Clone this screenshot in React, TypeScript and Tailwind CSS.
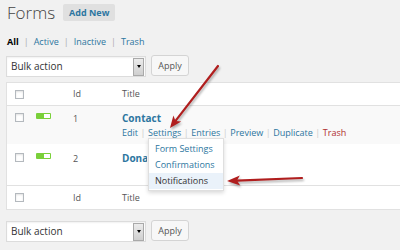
import React from 'react'

const font = "font-['Open_Sans','Liberation_Sans',sans-serif]"

function Checkbox() {
  return (
    <div className="w-[9px] h-[9px] border border-[#b4b9be] bg-white shadow-[inset_0_1px_2px_rgba(0,0,0,0.12)]" />
  )
}

function Toggle() {
  return (
    <div className="w-[15px] h-[6px] rounded-[1px] bg-[#7ad03a] flex justify-end items-center pr-[1px]">
      <div className="w-[6px] h-[4px] bg-white" />
    </div>
  )
}

function BulkNav() {
  return (
    <div className="flex items-start gap-[5px] pl-[6px]">
      <div className="mt-[1px] w-[140px] h-[21px] border border-[#dcdcdc] bg-white flex items-center justify-between pl-[4px] pr-[1px] shadow-[inset_0_1px_2px_rgba(0,0,0,0.06)]">
        <span className="text-[10px] text-[#333]">Bulk action</span>
        <div className="w-[11px] h-[18px] border border-[#a9a9a9] bg-gradient-to-b from-[#ececec] to-[#cfcfcf] flex items-center justify-center">
          <div className="w-0 h-0 border-l-[2px] border-r-[2px] border-t-[3px] border-l-transparent border-r-transparent border-t-black" />
        </div>
      </div>
      <button className="w-[38px] h-[21px] rounded-[3px] border border-[#d4d4d4] bg-[#f7f7f7] text-[9px] text-[#555] flex items-center justify-center">
        Apply
      </button>
    </div>
  )
}

function RowActions() {
  const items: { label: string; danger?: boolean }[] = [
    { label: 'Edit' },
    { label: 'Settings' },
    { label: 'Entries' },
    { label: 'Preview' },
    { label: 'Duplicate' },
    { label: 'Trash', danger: true },
  ]
  return (
    <div className="mt-[2px] flex items-center text-[9px] leading-[12px] whitespace-nowrap">
      {items.map((item, index) => (
        <span key={item.label} className="flex items-center">
          {index > 0 ? <span className="text-[#ccc] mx-[2.5px]">|</span> : null}
          <span className={item.danger ? 'text-[#b03030]' : 'text-[#2d76a0]'}>{item.label}</span>
        </span>
      ))}
    </div>
  )
}

export default function App() {
  return (
    <div className={`relative w-[400px] h-[250px] overflow-hidden bg-[#f1f1f1] ${font} text-[#555]`}>
      <div className="pt-[4px] pl-[7px] flex items-center gap-[8px] h-[21px]">
        <h1 className="text-[17px] font-light text-[#444] leading-none">Forms</h1>
        <button className="h-[17px] px-[6px] bg-[#e0e0e0] rounded-[2px] text-[9px] font-bold text-[#2d76a0]">
          Add New
        </button>
      </div>

      <div className="mt-[15px] pl-[7px] flex items-center h-[12px] text-[9px]">
        <span className="font-bold text-black">All</span>
        <span className="text-[#aaa] mx-[5px]">|</span>
        <span className="text-[#2d76a0]">Active</span>
        <span className="text-[#aaa] mx-[5px]">|</span>
        <span className="text-[#2d76a0]">Inactive</span>
        <span className="text-[#aaa] mx-[5px]">|</span>
        <span className="text-[#2d76a0]">Trash</span>
      </div>

      <div className="mt-[7px]">
        <BulkNav />
      </div>

      <div className="mt-[5px] ml-[6px] w-[420px] border border-[#e1e1e1] bg-white text-[9px]">
        <div className="h-[23px] flex items-center border-b border-[#e1e1e1]">
          <div className="w-[29px] pl-[8px]"><Checkbox /></div>
          <div className="w-[37px]" />
          <div className="w-[49px] text-[#555]">Id</div>
          <div className="text-[#555]">Title</div>
        </div>

        <div className="h-[38px] flex items-start bg-[#f9f9f9]">
          <div className="w-[29px] pl-[8px] pt-[7px]"><Checkbox /></div>
          <div className="w-[37px] pt-[7px]"><Toggle /></div>
          <div className="w-[49px] pt-[7px] leading-[12px] text-[#555]">1</div>
          <div className="pt-[6px]">
            <div className="text-[10px] leading-[13px] font-bold text-[#2d76a0]">Contact</div>
            <RowActions />
          </div>
        </div>

        <div className="h-[41px] flex items-start">
          <div className="w-[29px] pl-[8px] pt-[9px]"><Checkbox /></div>
          <div className="w-[37px] pt-[9px]"><Toggle /></div>
          <div className="w-[49px] pt-[9px] leading-[12px] text-[#555]">2</div>
          <div className="pt-[8px] w-[25px] overflow-hidden whitespace-nowrap text-[10px] leading-[13px] font-bold text-[#2d76a0]">Donation</div>
        </div>

        <div className="h-[24px] flex items-center border-t border-[#e1e1e1]">
          <div className="w-[29px] pl-[8px]"><Checkbox /></div>
          <div className="w-[37px]" />
          <div className="w-[49px] text-[#555]">Id</div>
          <div className="text-[#555]">Title</div>
        </div>
      </div>

      <div className="mt-[10px]">
        <BulkNav />
      </div>

      <div className="absolute left-[148px] top-[138px] w-[76px] pt-[2px] pb-[1px] bg-white border border-[#dfdfdf] shadow-[0_2px_4px_rgba(0,0,0,0.15)] text-[9px] text-[#2d76a0]">
        <div className="h-[16px] pl-[6px] flex items-center">Form Settings</div>
        <div className="h-[16px] pl-[6px] flex items-center">Confirmations</div>
        <div className="h-[16px] pl-[6px] flex items-center bg-[#eaf2fa] text-[#333]">Notifications</div>
      </div>

      <svg
        className="absolute inset-0 pointer-events-none [filter:drop-shadow(1px_2px_1px_rgba(0,0,0,0.3))]"
        width="400"
        height="250"
        viewBox="0 0 400 250"
      >
        <line x1="218" y1="66" x2="175.5" y2="120.9" stroke="#b01e1e" strokeWidth="2.2" strokeLinecap="round" />
        <polygon points="170,128 181.3,121.6 175.5,120.9 173.4,115.4" fill="#b01e1e" />
        <line x1="302" y1="178" x2="237" y2="180.6" stroke="#b01e1e" strokeWidth="2.2" strokeLinecap="round" />
        <polygon points="227,181 240.2,185.5 237,180.6 239.8,175.5" fill="#b01e1e" />
      </svg>
    </div>
  )
}
